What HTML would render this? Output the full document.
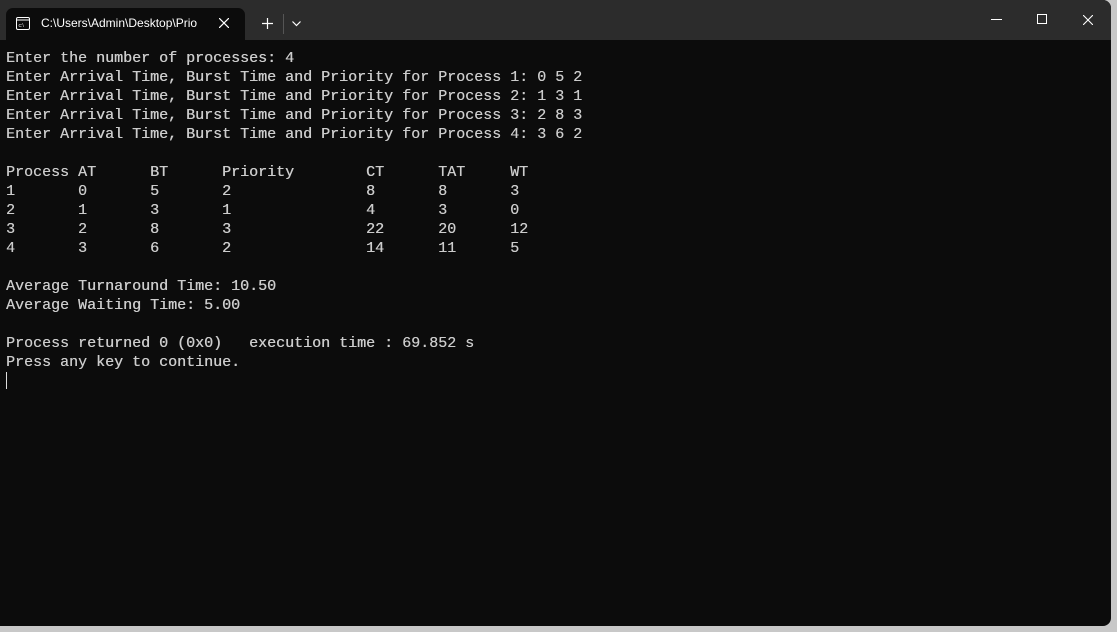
<!DOCTYPE html>
<html><head><style>
html,body{margin:0;padding:0;background:#c8c8c8;width:1117px;height:632px;overflow:hidden}
.win{position:absolute;left:0;top:0;width:1111px;height:626px;background:#0c0c0c;border-radius:0 8px 8px 0;overflow:hidden}
.bar{position:absolute;left:0;top:0;width:1111px;height:40px;background:#2c2c2c}
.tab{position:absolute;left:6px;top:8px;width:239px;height:32px;background:#0c0c0c;border-radius:7px 7px 0 0}
.tt{position:absolute;left:41px;top:16px;font:12px "Liberation Sans",sans-serif;color:#fff;white-space:nowrap;width:164px;overflow:hidden}
pre{position:absolute;left:6px;top:49px;margin:0;font:15px/19px "Liberation Mono",monospace;color:#cccccc;text-shadow:0.3px 0 0 #cccccc}
.cur{position:absolute;left:6px;top:372px;width:1px;height:17px;background:#ddd}
</style></head><body>
<div class="win">
<div class="bar">
<div class="tab"></div>
<svg style="position:absolute;left:16px;top:17px" width="14" height="13" viewBox="0 0 14 13"><rect x="0.5" y="0.5" width="13" height="12" rx="1.5" fill="none" stroke="#fff"/><line x1="1" y1="3" x2="13" y2="3" stroke="#fff"/><text x="2.5" y="10" font-size="5" fill="#fff" font-family="Liberation Sans">c:\</text></svg>
<div class="tt">C:\Users\Admin\Desktop\Prio</div>
<svg style="position:absolute;left:219px;top:18px" width="10" height="10"><path d="M0 0L10 10M10 0L0 10" stroke="#fff" stroke-width="1.2"/></svg>
<svg style="position:absolute;left:262px;top:18px" width="11" height="11"><path d="M5.5 0V11M0 5.5H11" stroke="#fff" stroke-width="1.2"/></svg>
<div style="position:absolute;left:283px;top:14px;width:1px;height:20px;background:#555"></div>
<svg style="position:absolute;left:292px;top:21px" width="9" height="6"><path d="M0.5 0.5L4.5 4.5L8.5 0.5" stroke="#fff" fill="none" stroke-width="1.2"/></svg>
<div style="position:absolute;left:991px;top:19px;width:11px;height:1px;background:#fff"></div>
<div style="position:absolute;left:1037px;top:14px;width:8px;height:8px;border:1px solid #fff"></div>
<svg style="position:absolute;left:1083px;top:15px" width="10" height="10"><path d="M0 0L10 10M10 0L0 10" stroke="#fff" stroke-width="1.1"/></svg>
</div>
<pre>Enter the number of processes: 4
Enter Arrival Time, Burst Time and Priority for Process 1: 0 5 2
Enter Arrival Time, Burst Time and Priority for Process 2: 1 3 1
Enter Arrival Time, Burst Time and Priority for Process 3: 2 8 3
Enter Arrival Time, Burst Time and Priority for Process 4: 3 6 2

Process AT      BT      Priority        CT      TAT     WT
1       0       5       2               8       8       3
2       1       3       1               4       3       0
3       2       8       3               22      20      12
4       3       6       2               14      11      5

Average Turnaround Time: 10.50
Average Waiting Time: 5.00

Process returned 0 (0x0)   execution time : 69.852 s
Press any key to continue.</pre>
<div class="cur"></div>
</div>
</body></html>
